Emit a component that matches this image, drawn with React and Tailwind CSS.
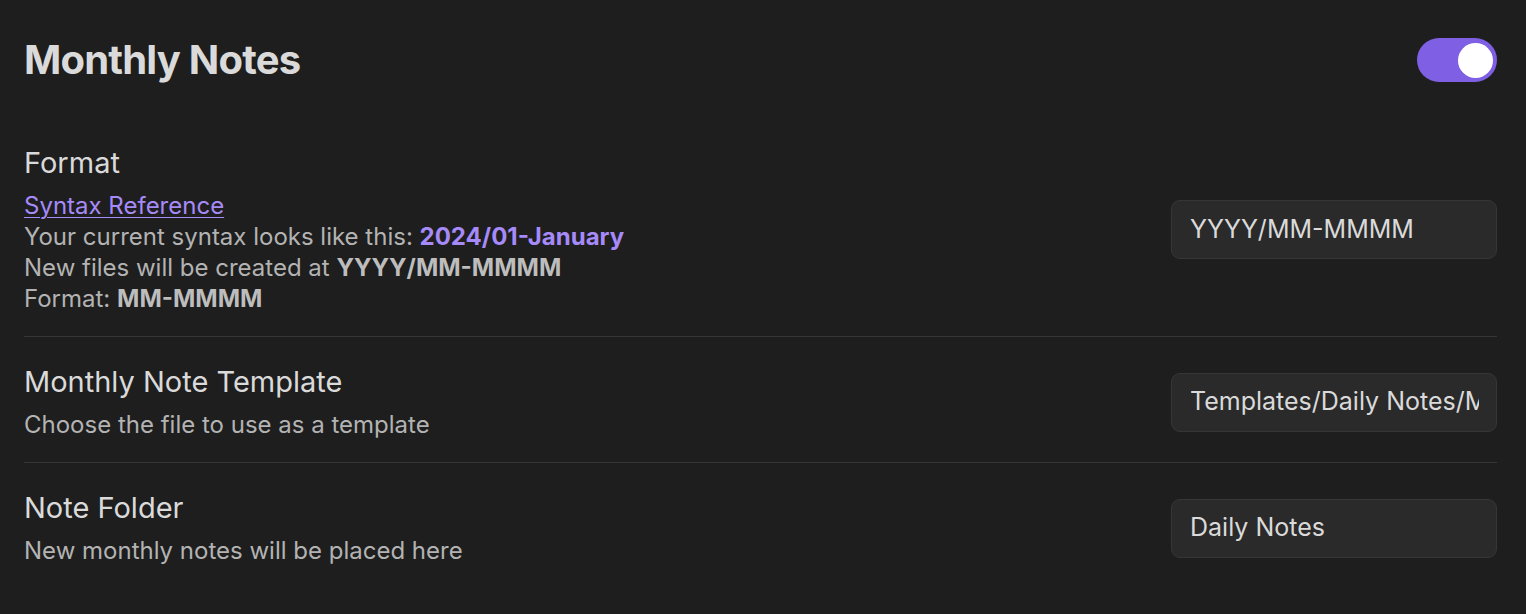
export default function App() {
  const font = { fontFamily: 'Inter, "Noto Sans", sans-serif' };
  return (
    <div className="min-h-[614px] w-full bg-[#1e1e1e] text-[#dadada]" style={font}>
      <div className="pl-6 pr-[29px]">
        <div className="flex h-[118px] items-start justify-between pt-[38px]">
          <h1 className="text-[40px] font-bold leading-[44px] tracking-[-0.02em] text-[#dadada]">Monthly Notes</h1>
          <div className="flex h-[44px] w-[80px] items-center justify-end rounded-full bg-[#7f5fe3] pr-[4px]">
            <div className="h-[35px] w-[35px] rounded-full bg-white" />
          </div>
        </div>

        <div className="flex items-center justify-between border-b border-[#363636] pb-[22px] pt-[27px]">
          <div>
            <div className="text-[29px] leading-[36px] text-[#dadada]">Format</div>
            <div className="mt-[9px] text-[24px] leading-[31px] text-[#b3b3b3]">
              <div><a className="text-[#a68af9] underline decoration-1 underline-offset-[3px]">Syntax Reference</a></div>
              <div>Your current syntax looks like this: <b className="font-bold text-[#a68af9]">2024/01-January</b></div>
              <div>New files will be created at <b className="font-bold text-[#bdbdbd]">YYYY/MM-MMMM</b></div>
              <div>Format: <b className="font-bold text-[#bdbdbd]">MM-MMMM</b></div>
            </div>
          </div>
          <div className="flex h-[59px] w-[326px] items-center overflow-hidden rounded-[9px] border border-[#363636] bg-[#2a2a2a] pl-[18px] pr-[17px] text-[25px] text-[#dadada]">
            <span className="whitespace-nowrap">YYYY/MM-MMMM</span>
          </div>
        </div>

        <div className="flex items-center justify-between border-b border-[#363636] pb-[22px] pt-[27px]">
          <div>
            <div className="text-[29px] leading-[36px] text-[#dadada]">Monthly Note Template</div>
            <div className="mt-[9px] text-[24px] leading-[31px] text-[#b3b3b3]">Choose the file to use as a template</div>
          </div>
          <div className="flex h-[59px] w-[326px] items-center rounded-[9px] border border-[#363636] bg-[#2a2a2a] pl-[18px] pr-[17px] text-[25px] text-[#dadada]">
            <span className="block w-full overflow-hidden whitespace-nowrap">Templates/Daily Notes/Monthly</span>
          </div>
        </div>

        <div className="flex items-center justify-between pb-[22px] pt-[27px]">
          <div>
            <div className="text-[29px] leading-[36px] text-[#dadada]">Note Folder</div>
            <div className="mt-[9px] text-[24px] leading-[31px] text-[#b3b3b3]">New monthly notes will be placed here</div>
          </div>
          <div className="flex h-[59px] w-[326px] items-center rounded-[9px] border border-[#363636] bg-[#2a2a2a] pl-[18px] pr-[17px] text-[25px] text-[#dadada]">
            <span className="whitespace-nowrap">Daily Notes</span>
          </div>
        </div>
      </div>
    </div>
  );
}
